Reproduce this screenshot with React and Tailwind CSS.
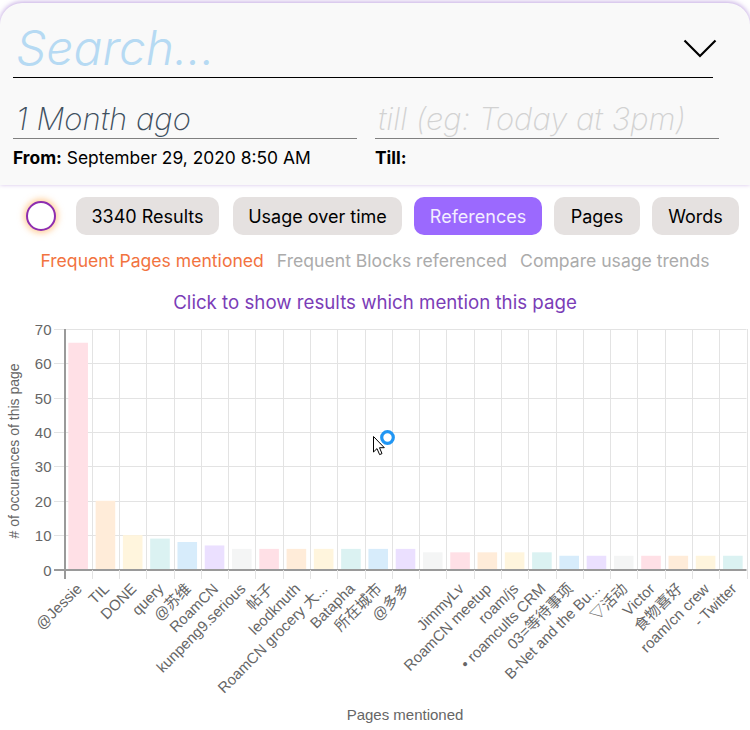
import React from "react";

const DATA = [
  ["@Jessie", 66],
  ["TIL", 20],
  ["DONE", 10],
  ["query", 9],
  ["@苏维", 8],
  ["RoamCN", 7],
  ["kunpeng9.serious", 6],
  ["帖子", 6],
  ["leodknuth", 6],
  ["RoamCN grocery 大...", 6],
  ["Batapha", 6],
  ["所在城市", 6],
  ["@多多", 6],
  ["", 5],
  ["JimmyLv", 5],
  ["RoamCN meetup", 5],
  ["roam/js", 5],
  ["• roamcults CRM", 5],
  ["03=等待事项", 4],
  ["B-Net and the Bu...", 4],
  ["▽活动", 4],
  ["Victor", 4],
  ["食物喜好", 4],
  ["roam/cn crew", 4],
  ["- Twitter", 4],
];

const COLORS = ["#ffe0e6", "#ffecd9", "#fff5dd", "#dbf2f2", "#d7ecfb", "#ebe0ff", "#f4f5f5"];

const X0 = 64.5;
const X1 = 746.5;
const Y0 = 569.5;
const YTOP = 329;
const CW = (X1 - X0) / DATA.length;
const yOf = (v) => Y0 - (v * (Y0 - YTOP)) / 70;

function Chart() {
  const font = "'Liberation Sans', Arial, 'Noto Sans CJK SC', sans-serif";
  return (
    <svg width="750" height="415" viewBox="0 315 750 415" className="block">
      {[0, 10, 20, 30, 40, 50, 60, 70].map((v) => {
        const y = Math.round(yOf(v)) + 0.5;
        return (
          <g key={v}>
            <line x1={54} x2={X1} y1={y} y2={y} stroke={v === 0 ? "#9a9a9a" : "#e3e3e3"} strokeWidth="1" />
            <text x={51.5} y={y + 5.5} textAnchor="end" fontFamily={font} fontSize="15" fill="#666">
              {v}
            </text>
          </g>
        );
      })}
      {Array.from({ length: DATA.length + 1 }).map((_, i) => {
        const x = Math.round(X0 + i * CW) + 0.5;
        return (
          <line
            key={i}
            x1={x}
            x2={x}
            y1={YTOP}
            y2={579}
            stroke={i === 0 ? "#9a9a9a" : "#e3e3e3"}
            strokeWidth="1"
          />
        );
      })}
      {DATA.map(([, v], i) => {
        const cx = X0 + (i + 0.5) * CW;
        const bw = 19.6;
        const y = yOf(v);
        return <rect key={i} x={cx - bw / 2} y={y} width={bw} height={Y0 - 0.5 - y} fill={COLORS[i % 7]} />;
      })}
      <line x1={54} x2={X1} y1={Y0} y2={Y0} stroke="#9a9a9a" strokeWidth="1" />
      <line x1={X0} x2={X0} y1={YTOP} y2={579} stroke="#9a9a9a" strokeWidth="1" />
      {DATA.map(([label], i) => {
        const cx = X0 + (i + 0.5) * CW + 1;
        return (
          <text
            key={i}
            x={cx}
            y={586}
            dy="0.35em"
            textAnchor="end"
            fontFamily={font}
            fontSize="15"
            fill="#666"
            transform={`rotate(-45 ${cx} 586)`}
          >
            {label}
          </text>
        );
      })}
      <text
        x={14}
        y={451}
        dy="0.35em"
        textAnchor="middle"
        fontFamily={font}
        fontSize="14"
        fill="#666"
        transform="rotate(-90 14 451)"
      >
        # of occurances of this page
      </text>
      <text x={405} y={720} textAnchor="middle" fontFamily={font} fontSize="15" fill="#666">
        Pages mentioned
      </text>
      <circle cx="387.5" cy="437.5" r="5.8" fill="none" stroke="#2196f3" strokeWidth="3.2" />
      <path
        d="M373.5 436.5 L373.5 452 L377 448.6 L379.6 454.6 L382 453.6 L379.5 447.7 L384.3 447.7 Z"
        fill="#fff"
        stroke="#000"
        strokeWidth="1"
        strokeLinejoin="round"
      />
    </svg>
  );
}

export default function App() {
  return (
    <div className="w-[750px] h-[730px] overflow-hidden bg-white font-[Inter,sans-serif] text-black">
      <div className="mt-[3px] h-[182px] rounded-t-[22px] bg-[#f9f9f9] shadow-[0_-1px_5px_rgba(140,90,200,0.55)] px-[13px] pt-[16px]">
        <div className="w-[700px] flex items-center border-b border-black">
          <div className="flex-1 pl-[3px] text-[48px] leading-[58px] font-light italic text-[#b6daf3]">Search...</div>
          <svg width="34" height="19" viewBox="0 0 34 19" className="-mr-[4px] shrink-0">
            <polyline points="1.5,1.5 17,17 32.5,1.5" fill="none" stroke="#000" strokeWidth="2.2" />
          </svg>
        </div>
        <div className="flex gap-[18px]">
          <div className="w-[344px]">
            <div className="pt-[22px] border-b border-[#808080] pl-[3px] text-[31px] leading-[38px] font-extralight italic text-[#3f5060]">
              1 Month ago
            </div>
            <div className="mt-[9px] text-[17.4px] leading-[20px]">
              <span className="font-bold">From:</span> September 29, 2020 8:50 AM
            </div>
          </div>
          <div className="w-[344px]">
            <div className="pt-[22px] border-b border-[#808080] pl-[3px] text-[31px] leading-[38px] font-extralight italic text-[#d2d2d2]">
              till (eg: Today at 3pm)
            </div>
            <div className="mt-[9px] text-[17.4px] leading-[20px]">
              <span className="font-bold">Till:</span>
            </div>
          </div>
        </div>
      </div>

      <div className="mt-[12px] h-[38px] flex items-center text-[18px]">
        <div className="ml-[26px] mr-[20px] w-[30px] h-[30px] rounded-full border-2 border-[#8e2db0] bg-white shadow-[0_0_6px_2px_rgba(255,165,70,0.55)]" />
        <div className="w-[143px] h-[38px] mr-[14px] rounded-[10px] bg-[#e5e1e0] flex items-center justify-center">3340 Results</div>
        <div className="w-[169px] h-[38px] mr-[12px] rounded-[10px] bg-[#e5e1e0] flex items-center justify-center">Usage over time</div>
        <div className="w-[128px] h-[38px] mr-[12px] rounded-[10px] bg-[#9b69fe] text-[#f3eeff] flex items-center justify-center">References</div>
        <div className="w-[86px] h-[38px] mr-[12px] rounded-[10px] bg-[#e5e1e0] flex items-center justify-center">Pages</div>
        <div className="w-[87px] h-[38px] rounded-[10px] bg-[#e5e1e0] flex items-center justify-center">Words</div>
      </div>

      <div className="mt-[15px] h-[22px] leading-[22px] flex justify-center gap-[13px] text-[17.6px]">
        <span className="text-[#f2733f]">Frequent Pages mentioned</span>
        <span className="text-[#ababab]">Frequent Blocks referenced</span>
        <span className="text-[#ababab]">Compare usage trends</span>
      </div>

      <div className="mt-[19px] h-[24px] leading-[24px] text-center text-[18.7px] text-[#7b3db7]">
        Click to show results which mention this page
      </div>

      <Chart />
    </div>
  );
}
